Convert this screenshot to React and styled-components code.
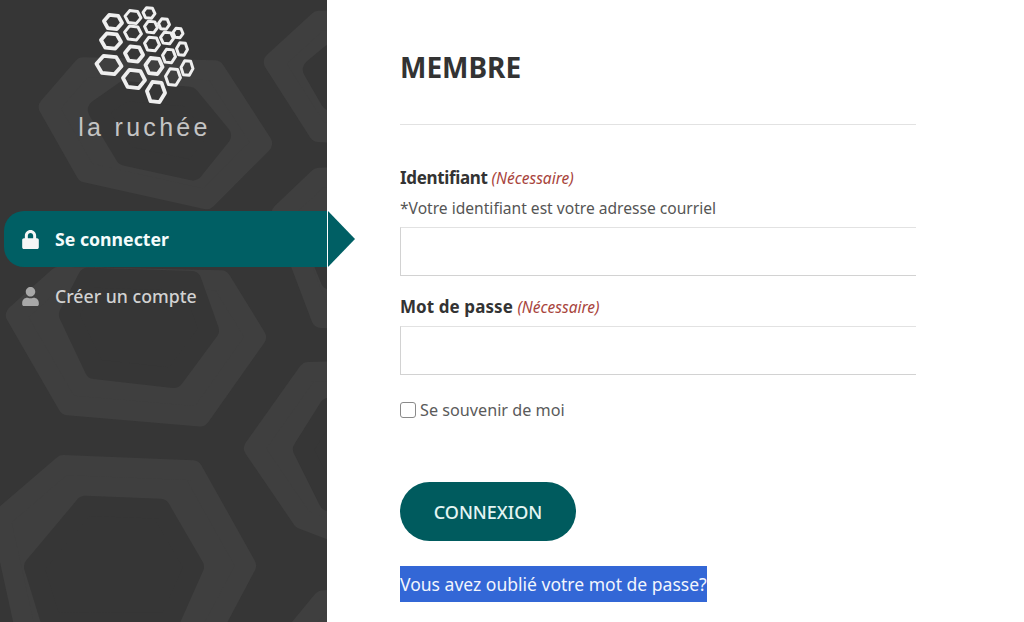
import React from "react";
import styled, { createGlobalStyle } from "styled-components";
import { FaLock, FaUser } from "react-icons/fa";

const GlobalStyle = createGlobalStyle`
  html, body {
    margin: 0;
    padding: 0;
    height: 100%;
    overflow: hidden;
    background: #fff;
    font-family: "Noto Sans", "Open Sans", sans-serif;
  }
`;

const Page = styled.div`
  display: flex;
  height: 622px;
  width: 1024px;
  overflow: hidden;
`;

const Sidebar = styled.aside`
  position: relative;
  flex: 0 0 327px;
  background: #363636;
  display: flex;
  flex-direction: column;
`;

const Backdrop = styled.svg`
  position: absolute;
  inset: 0;
  width: 327px;
  height: 622px;
`;

const Brand = styled.div`
  position: relative;
  display: flex;
  flex-direction: column;
  align-items: center;
  height: 211px;
`;

const LogoMark = styled.svg`
  display: block;
  width: 170px;
  height: 110px;
  margin-left: -37px;
`;

const BrandName = styled.div`
  margin-top: 2px;
  margin-left: -38px;
  color: #c4c4c4;
  font-family: "Liberation Sans", sans-serif;
  font-size: 25px;
  line-height: 30px;
  letter-spacing: 3.3px;
`;

const Nav = styled.nav`
  position: relative;
  display: flex;
  flex-direction: column;
  padding-left: 4px;
`;

const NavItem = styled.a`
  position: relative;
  display: flex;
  align-items: center;
  gap: 15px;
  height: 56px;
  padding-left: 17px;
  font-size: 17.7px;
  font-weight: ${(p) => (p.$active ? 700 : 500)};
  color: ${(p) => (p.$active ? "#f4fbfb" : "#d2d2d2")};
  background: ${(p) => (p.$active ? "#005f64" : "transparent")};
  border-radius: 20px 0 0 20px;
  margin-bottom: 1px;

  svg {
    width: 19px;
    height: 19px;
    color: ${(p) => (p.$active ? "#f6f6f6" : "#a8a8a8")};
  }
`;

const Arrow = styled.span`
  position: absolute;
  left: 100%;
  top: 0;
  width: 0;
  height: 0;
  margin-left: 1px;
  border-left: 27px solid #005f64;
  border-top: 28px solid transparent;
  border-bottom: 28px solid transparent;
`;

const Main = styled.main`
  flex: 1;
  padding-left: 73px;
  min-width: 0;
`;

const Content = styled.div`
  width: 516px;
  overflow: hidden;
  display: flex;
  flex-direction: column;
  align-items: flex-start;
`;

const Title = styled.h1`
  margin: 48px 0 0;
  font-size: 28px;
  line-height: 38px;
  font-weight: 700;
  color: #333;
`;

const Rule = styled.hr`
  width: 100%;
  margin: 38px 0 0;
  border: 0;
  border-top: 1px solid #e2e2e2;
`;

const FieldLabel = styled.label`
  display: block;
  margin-top: ${(p) => p.$top}px;
  font-size: 17px;
  line-height: 24px;
  font-weight: 700;
  letter-spacing: ${(p) => p.$spacing}px;
  color: #333;
`;

const Required = styled.em`
  font-size: 15.5px;
  font-weight: 400;
  letter-spacing: 0;
  color: #a8443c;
`;

const Hint = styled.div`
  margin-top: 8px;
  font-size: 15.6px;
  line-height: 20px;
  color: #555;
`;

const TextInput = styled.input`
  box-sizing: border-box;
  display: block;
  width: 530px;
  height: 49px;
  margin-top: ${(p) => p.$top}px;
  border: 1px solid #d2d2d2;
  border-top-color: #e2e2e2;
  background: #fff;
  outline: none;
`;

const Remember = styled.label`
  display: flex;
  align-items: center;
  gap: 4px;
  margin-top: 24px;
  font-size: 16.2px;
  line-height: 22px;
  color: #5a5a5a;
`;

const Check = styled.input`
  appearance: none;
  box-sizing: border-box;
  width: 16px;
  height: 16px;
  margin: 0;
  border: 1.5px solid #8a8a8a;
  border-radius: 3px;
  background: #fff;
`;

const Submit = styled.button`
  width: 176px;
  height: 59px;
  margin-top: 61px;
  border: 0;
  border-radius: 30px;
  background: #005b5e;
  color: #e4f5f3;
  font-family: inherit;
  font-size: 18px;
  font-weight: 500;
`;

const ForgotLink = styled.a`
  display: block;
  margin-top: 25px;
  height: 36px;
  line-height: 37px;
  background: #3367d6;
  color: #f2f5fd;
  font-size: 17.55px;
  white-space: nowrap;
`;

// outer outline and hole of each hexagon of the sidebar pattern
const bands = [
  [
    [[38, 105], [75, 60], [223, 63], [273, 145], [213, 208], [77, 179]],
    [[87, 107], [117, 83], [197, 89], [232, 137], [200, 179], [117, 163]],
  ],
  [
    [[5, 313], [50, 270], [230, 274], [267, 337], [207, 425], [60, 413]],
    [[58, 313], [80, 270], [200, 274], [220, 331], [180, 387], [87, 377]],
  ],
  [
    [[-10, 516], [57, 456], [200, 462], [257, 567], [213, 650], [20, 650]],
    [[23, 567], [80, 496], [167, 500], [205, 567], [177, 630], [43, 630]],
  ],
  [
    [[263, 60], [317, 10], [370, 10], [370, 143], [317, 143]],
    [[302, 67], [327, 44], [370, 44], [370, 111], [327, 111]],
  ],
  [
    [[272, 208], [317, 167], [370, 167], [370, 329], [320, 329]],
    [[305, 240], [327, 215], [370, 215], [370, 290], [327, 290]],
  ],
  [
    [[243, 448], [307, 361], [370, 361], [370, 553], [300, 530]],
    [[292, 448], [327, 397], [370, 397], [370, 512], [327, 512]],
  ],
  [
    [[283, 640], [317, 591], [370, 591], [370, 660]],
    [[320, 640], [340, 620], [370, 620], [370, 660]],
  ],
];

// pull a polygon in by the width its round stroke adds back
const inset = (pts, by) => {
  const cx = pts.reduce((s, p) => s + p[0], 0) / pts.length;
  const cy = pts.reduce((s, p) => s + p[1], 0) / pts.length;
  return pts
    .map(([x, y]) => {
      const d = Math.hypot(x - cx, y - cy);
      return `${x + ((cx - x) / d) * by},${y + ((cy - y) / d) * by}`;
    })
    .join(" ");
};

// center x, center y, width, height of each cell of the logo
const cells = [
  [113, 22, 22, 17], [133, 17, 19, 15], [149, 13, 15, 13], [164, 24, 14, 13], [178, 33, 13, 12],
  [111, 41, 24, 18], [133, 33, 20, 16], [151, 27, 16, 14], [167, 38, 16, 14], [182, 49, 14, 15],
  [109, 65, 29, 21], [134, 54, 22, 18], [152, 44, 18, 16], [169, 56, 16, 16], [187, 68, 15, 17],
  [134, 79, 26, 21], [154, 66, 21, 19], [173, 77, 18, 19], [156, 92, 22, 23],
];

const strokeOf = (w) => (w > 20 ? 3.8 : 3);

const hexPoints = ([cx, cy, w, h]) => {
  const x = cx - 60;
  const sw = strokeOf(w);
  const rw = (w - sw) / 2;
  const rh = (h - sw) / 2;
  return [
    [x - rw, cy],
    [x - rw / 2, cy - rh],
    [x + rw / 2, cy - rh],
    [x + rw, cy],
    [x + rw / 2, cy + rh],
    [x - rw / 2, cy + rh],
  ]
    .map((p) => p.join(","))
    .join(" ");
};

const Logo = () => (
  <LogoMark viewBox="0 0 170 110">
    {cells.map((c, i) => (
      <polygon
        key={i}
        points={hexPoints(c)}
        transform={`rotate(6 ${c[0] - 60} ${c[1]})`}
        fill="none"
        stroke="#efefef"
        strokeWidth={strokeOf(c[2])}
        strokeLinejoin="round"
      />
    ))}
  </LogoMark>
);

const App = () => {
  return (
    <Page>
      <GlobalStyle />
      <Sidebar>
        <Backdrop viewBox="0 0 327 622">
          {bands.map(([outer, hole], i) => (
            <g key={i} strokeWidth="20" strokeLinejoin="round">
              <polygon points={inset(outer, 11)} fill="#3f3f3f" stroke="#3f3f3f" />
              <polygon points={inset(hole, 11)} fill="#363636" stroke="#363636" />
            </g>
          ))}
        </Backdrop>
        <Brand>
          <Logo />
          <BrandName>la ruchée</BrandName>
        </Brand>
        <Nav>
          <NavItem $active>
            <FaLock />
            Se connecter
            <Arrow />
          </NavItem>
          <NavItem>
            <FaUser />
            Créer un compte
          </NavItem>
        </Nav>
      </Sidebar>
      <Main>
        <Content>
          <Title>MEMBRE</Title>
          <Rule />
          <FieldLabel $top={41} $spacing={-0.35}>
            Identifiant <Required>(Nécessaire)</Required>
          </FieldLabel>
          <Hint>*Votre identifiant est votre adresse courriel</Hint>
          <TextInput $top={9} type="text" />
          <FieldLabel $top={19} $spacing={0.08}>
            Mot de passe <Required>(Nécessaire)</Required>
          </FieldLabel>
          <TextInput $top={7} type="password" />
          <Remember>
            <Check type="checkbox" />
            Se souvenir de moi
          </Remember>
          <Submit>CONNEXION</Submit>
          <ForgotLink>Vous avez oublié votre mot de passe?</ForgotLink>
        </Content>
      </Main>
    </Page>
  );
};

export default App;
